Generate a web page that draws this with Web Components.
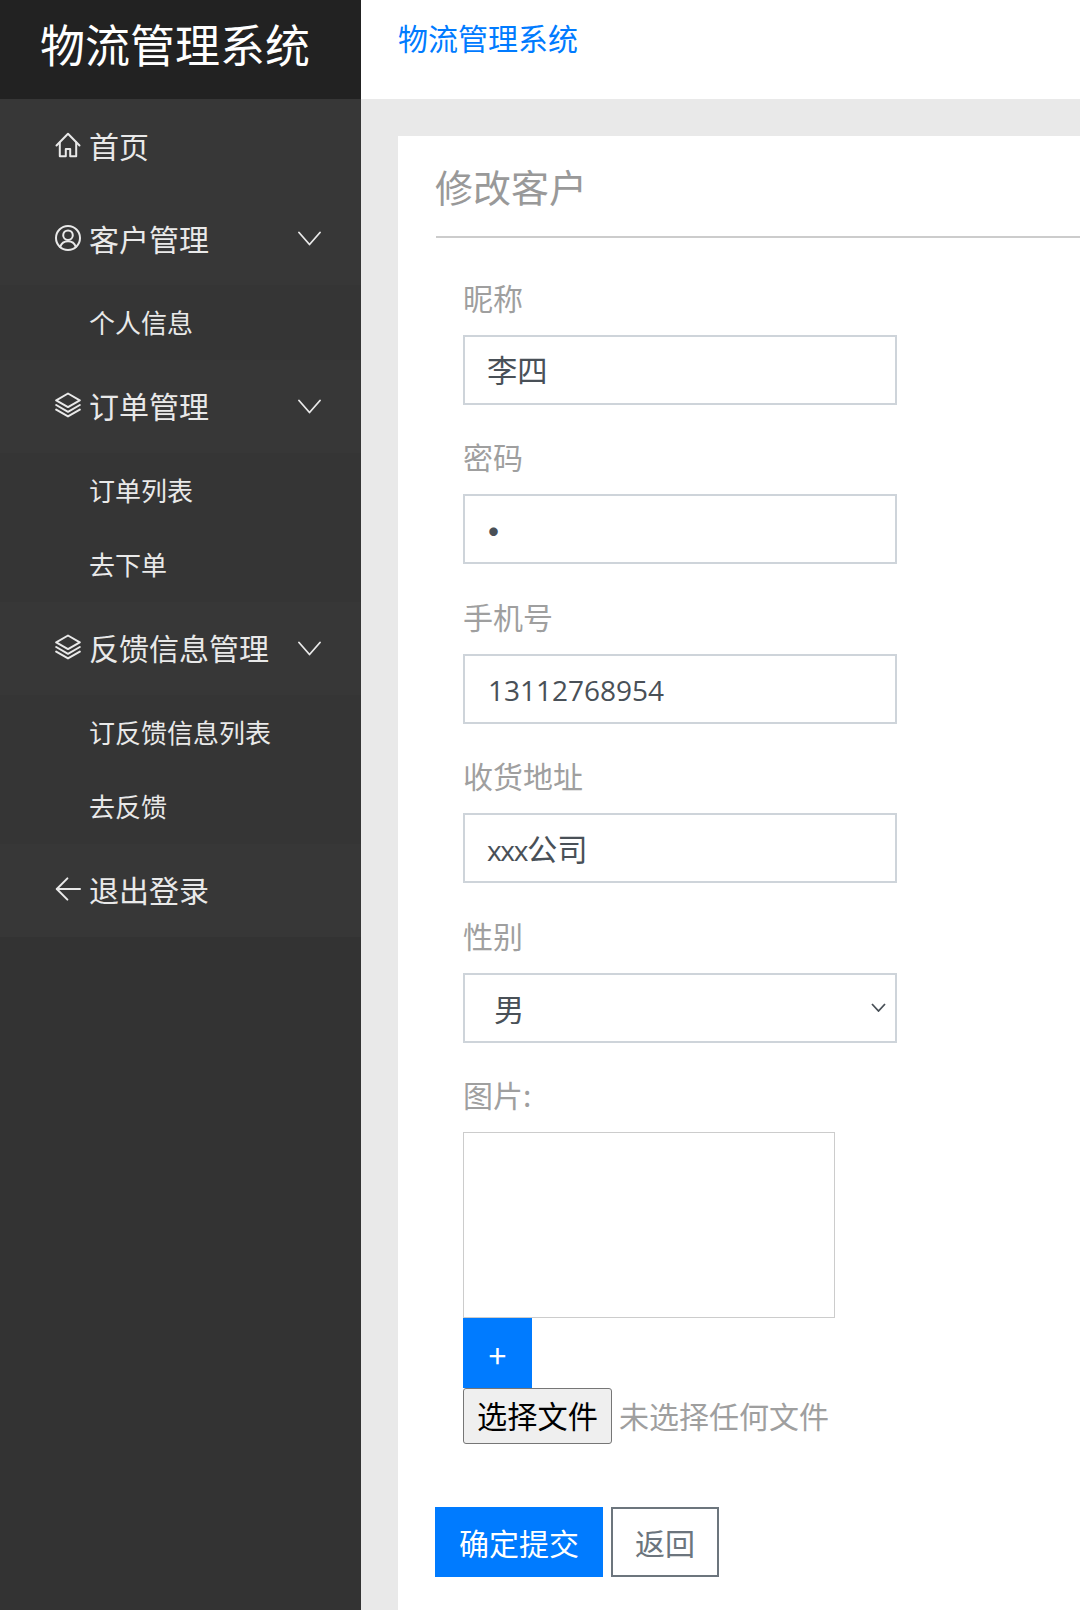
<!DOCTYPE html>
<html lang="zh-CN">
<head>
<meta charset="utf-8">
<title>物流管理系统</title>
<style>
	html, body {
		margin: 0;
		height: 100%;
		overflow: hidden;
		background: #fff;
		font-family: "Noto Sans CJK SC", sans-serif;
	}
	logistics-app {
		height: 1610px;
	}
	.latin {
		font-family: "Open Sans", sans-serif;
		font-size: 28px;
		position: relative;
		left: 1px;
	}
	.latin-x {
		font-family: "Open Sans", sans-serif;
		font-size: 28px;
		letter-spacing: -1.3px;
	}
	.dot {
		font-size: 33px;
		font-weight: 700;
		position: relative;
		left: -10px;
		top: 1px;
	}
</style>
</head>
<body>
<logistics-app>
	<side-bar slot="side" brand="物流管理系统">
		<nav-item icon="home">首页</nav-item>
		<nav-item icon="user" arrow>客户管理</nav-item>
		<nav-sub>个人信息</nav-sub>
		<nav-item icon="layers" arrow>订单管理</nav-item>
		<nav-sub>订单列表</nav-sub>
		<nav-sub>去下单</nav-sub>
		<nav-item icon="layers" arrow>反馈信息管理</nav-item>
		<nav-sub>订反馈信息列表</nav-sub>
		<nav-sub>去反馈</nav-sub>
		<nav-item icon="back">退出登录</nav-item>
	</side-bar>
	<top-bar slot="top">物流管理系统</top-bar>
	<form-card heading="修改客户">
		<form-field label="昵称">李四</form-field>
		<form-field label="密码"><span class="dot">•</span></form-field>
		<form-field label="手机号"><span class="latin">13112768954</span></form-field>
		<form-field label="收货地址"><span class="latin-x">xxx</span>公司</form-field>
		<form-field label="性别" select>男</form-field>
		<image-upload label="图片:"></image-upload>
		<form-actions slot="actions">
			<action-button primary>确定提交</action-button>
			<action-button>返回</action-button>
		</form-actions>
	</form-card>
</logistics-app>

<script>
const ICONS = {
	home: '<path d="M1.500 13.500 13 1.800l11.500 11.700"/><path d="M4.800 10.400V24.200h6V17h4.400v7.200h6V10.400"/>',
	user: '<circle cx="13" cy="13" r="12"/><circle cx="13" cy="10.200" r="4.800"/><path d="M5.200 22c1.200-3.800 4.100-5.800 7.800-5.800s6.600 2 7.800 5.800"/>',
	layers: '<path d="M13 1.500 24.800 8.300 13 15.100 1.200 8.300Z"/><path d="m1.200 13 11.800 6.800L24.800 13"/><path d="m1.200 17.600 11.800 6.800 11.800-6.800"/>',
	back: '<path d="M25 13H1.800"/><path d="M12.400 2.400 1.800 13l10.600 10.600"/>'
};

class LogisticsApp extends HTMLElement {
	constructor() {
		super();
		this.attachShadow({ mode: 'open' });
		this.shadowRoot.innerHTML = `
			<style>
				:host {
					display: grid;
					grid-template-columns: 361px 1fr;
					grid-template-rows: 99px 1fr;
					width: 1080px;
					overflow: hidden;
				}
				.side {
					grid-row: 1 / 3;
					display: flex;
				}
				main {
					background: #e9e9e9;
					padding: 37px 0 0 37px;
					display: flex;
					min-height: 0;
				}
			</style>
			<div class="side"><slot name="side"></slot></div>
			<slot name="top"></slot>
			<main><slot></slot></main>
		`;
	}
}

class SideBar extends HTMLElement {
	constructor() {
		super();
		this.attachShadow({ mode: 'open' });
		this.shadowRoot.innerHTML = `
			<style>
				:host {
					display: flex;
					flex-direction: column;
					width: 100%;
					background: #333;
				}
				.brand {
					height: 99px;
					flex: none;
					background: #222;
					color: #fff;
					font-size: 45px;
					line-height: 88px;
					padding-left: 40px;
				}
			</style>
			<div class="brand"></div>
			<slot></slot>
		`;
	}

	connectedCallback() {
		this.shadowRoot.querySelector('.brand').textContent = this.getAttribute('brand');
	}
}

class NavItem extends HTMLElement {
	constructor() {
		super();
		this.attachShadow({ mode: 'open' });
		this.shadowRoot.innerHTML = `
			<style>
				:host {
					box-sizing: border-box;
					display: flex;
					align-items: center;
					height: 93px;
					background: #373737;
					color: #e9e9e9;
					font-size: 30px;
					padding: 0 40px 2px 55px;
				}
				svg {
					flex: none;
					fill: none;
					stroke: currentColor;
					stroke-width: 2;
					stroke-linecap: round;
					stroke-linejoin: round;
				}
				.icon {
					width: 26px;
					height: 26px;
					margin-right: 8px;
				}
				.arrow {
					width: 23px;
					height: 15px;
					margin-left: auto;
					position: relative;
					top: 1px;
					stroke-width: 1.800;
				}
				.arrow[hidden] {
					display: none;
				}
			</style>
			<svg class="icon" viewBox="0 0 26 26"></svg>
			<slot></slot>
			<svg class="arrow" viewBox="0 0 23 15" hidden><path d="M1 1.500 11.500 13.500 22 1.500"/></svg>
		`;
	}

	connectedCallback() {
		this.shadowRoot.querySelector('.icon').innerHTML = ICONS[this.getAttribute('icon')] || '';
		this.shadowRoot.querySelector('.arrow').toggleAttribute('hidden', !this.hasAttribute('arrow'));
	}
}

class NavSub extends HTMLElement {
	constructor() {
		super();
		this.attachShadow({ mode: 'open' });
		this.shadowRoot.innerHTML = `
			<style>
				:host {
					box-sizing: border-box;
					display: flex;
					align-items: center;
					height: 74.500px;
					background: #353535;
					color: #e9e9e9;
					font-size: 26px;
					padding: 0 0 1px 89px;
				}
			</style>
			<slot></slot>
		`;
	}
}

class TopBar extends HTMLElement {
	constructor() {
		super();
		this.attachShadow({ mode: 'open' });
		this.shadowRoot.innerHTML = `
			<style>
				:host {
					display: block;
					background: #fff;
					color: #007bff;
					font-size: 30px;
					line-height: 45px;
					padding: 15px 0 0 37px;
				}
			</style>
			<slot></slot>
		`;
	}
}

class FormCard extends HTMLElement {
	constructor() {
		super();
		this.attachShadow({ mode: 'open' });
		this.shadowRoot.innerHTML = `
			<style>
				:host {
					display: block;
					flex: 1;
					background: #fff;
					padding-left: 38px;
				}
				h2 {
					margin: 0;
					height: 100px;
					line-height: 100px;
					font-size: 38px;
					font-weight: 400;
					color: #999;
					border-bottom: 2px solid #ccc;
					text-indent: -1px;
				}
				.fields {
					padding: 38.500px 0 0 27px;
				}
			</style>
			<h2></h2>
			<div class="fields"><slot></slot></div>
			<slot name="actions"></slot>
		`;
	}

	connectedCallback() {
		this.shadowRoot.querySelector('h2').textContent = this.getAttribute('heading');
	}
}

class FormField extends HTMLElement {
	constructor() {
		super();
		this.attachShadow({ mode: 'open' });
		this.shadowRoot.innerHTML = `
			<style>
				:host {
					display: block;
					margin-bottom: 31.500px;
					font-size: 30.300px;
				}
				label {
					display: block;
					font-size: 30px;
					line-height: 41px;
					margin-bottom: 17px;
					color: #9f9f9f;
				}
				.control {
					box-sizing: border-box;
					display: flex;
					align-items: center;
					width: 434px;
					height: 70px;
					padding: 0 24px 1px 22px;
					background: #fff;
					border: 2px solid #ced4da;
					color: #495057;
				}
				:host([select]) .control {
					padding: 0 9px 0 29px;
					justify-content: space-between;
				}
				svg {
					width: 15px;
					height: 9px;
					fill: none;
					stroke: #495057;
					stroke-width: 1.800;
				}
				svg[hidden] {
					display: none;
				}
			</style>
			<label></label>
			<div class="control">
				<span><slot></slot></span>
				<svg viewBox="0 0 15 9" hidden><path d="M1 1 7.500 8 14 1"/></svg>
			</div>
		`;
	}

	connectedCallback() {
		this.shadowRoot.querySelector('label').textContent = this.getAttribute('label');
		this.shadowRoot.querySelector('svg').toggleAttribute('hidden', !this.hasAttribute('select'));
	}
}

class ImageUpload extends HTMLElement {
	constructor() {
		super();
		this.attachShadow({ mode: 'open' });
		this.shadowRoot.innerHTML = `
			<style>
				:host {
					display: block;
					font-size: 30px;
				}
				label {
					display: block;
					line-height: 41px;
					margin-bottom: 17px;
					color: #9f9f9f;
				}
				.preview {
					box-sizing: border-box;
					width: 372px;
					height: 186px;
					border: 1px solid #ccc;
				}
				.plus {
					display: flex;
					align-items: center;
					justify-content: center;
					width: 69px;
					height: 70px;
					padding-top: 1px;
					box-sizing: border-box;
					background: #007bff;
					color: #fff;
					font-size: 32px;
					line-height: 1;
				}
				.file {
					display: flex;
					align-items: center;
					color: #9f9f9f;
				}
				.file span {
					padding-bottom: 2px;
				}
				button {
					box-sizing: border-box;
					width: 149px;
					height: 56px;
					padding: 0 0 3px;
					margin-right: 7px;
					font: inherit;
					font-size: 30.200px;
					color: #000;
					background: #efefef;
					border: 1px solid #767676;
					border-radius: 3px;
				}
			</style>
			<label></label>
			<div class="preview"></div>
			<div class="plus">+</div>
			<div class="file">
				<button type="button">选择文件</button>
				<span>未选择任何文件</span>
			</div>
		`;
	}

	connectedCallback() {
		this.shadowRoot.querySelector('label').textContent = this.getAttribute('label');
	}
}

class FormActions extends HTMLElement {
	constructor() {
		super();
		this.attachShadow({ mode: 'open' });
		this.shadowRoot.innerHTML = `
			<style>
				:host {
					display: flex;
					gap: 8px;
					margin: 63px 0 0 -1px;
				}
			</style>
			<slot></slot>
		`;
	}
}

class ActionButton extends HTMLElement {
	constructor() {
		super();
		this.attachShadow({ mode: 'open' });
		this.shadowRoot.innerHTML = `
			<style>
				:host {
					box-sizing: border-box;
					display: flex;
					align-items: center;
					justify-content: center;
					width: 108px;
					height: 70px;
					padding-bottom: 1px;
					font-size: 30px;
					color: #6c757d;
					background: #fff;
					border: 2px solid #6c757d;
				}
				:host([primary]) {
					width: 168px;
					color: #fff;
					background: #007bff;
					border-color: #007bff;
				}
			</style>
			<slot></slot>
		`;
	}
}

customElements.define('logistics-app', LogisticsApp);
customElements.define('side-bar', SideBar);
customElements.define('nav-item', NavItem);
customElements.define('nav-sub', NavSub);
customElements.define('top-bar', TopBar);
customElements.define('form-card', FormCard);
customElements.define('form-field', FormField);
customElements.define('image-upload', ImageUpload);
customElements.define('form-actions', FormActions);
customElements.define('action-button', ActionButton);
</script>
</body>
</html>
